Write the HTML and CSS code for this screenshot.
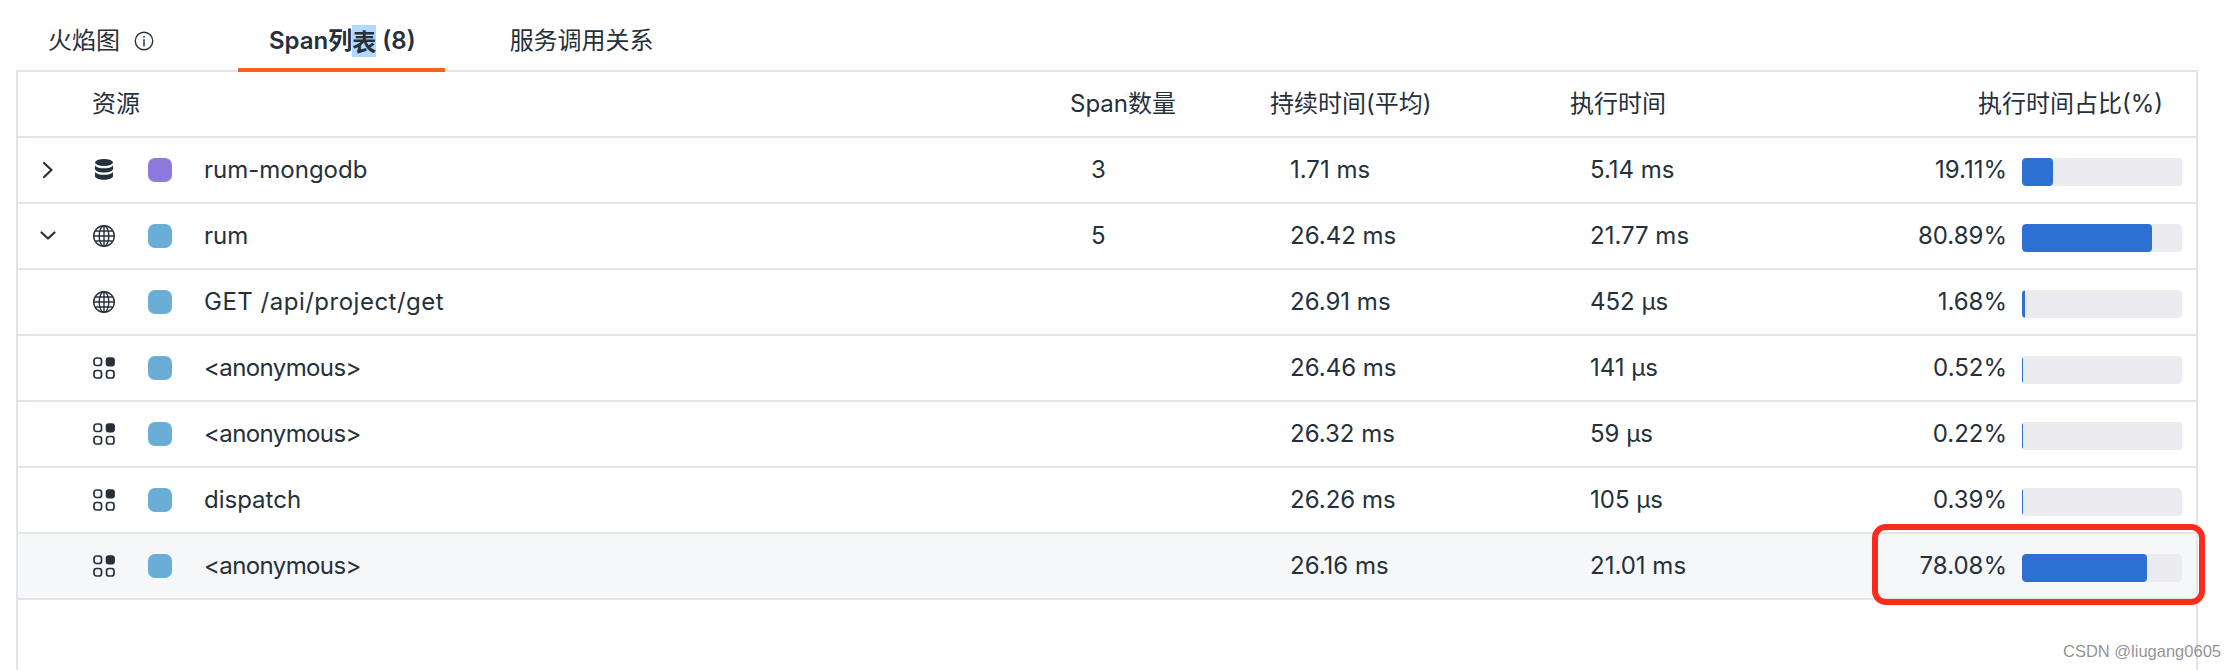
FILE: index.html
```html
<!DOCTYPE html>
<html lang="zh">
<head>
<meta charset="utf-8">
<title>Span列表</title>
<link rel="stylesheet" href="styles.css">
</head>
<body>
<svg class="defs" width="0" height="0" aria-hidden="true">
  <symbol id="i-right" viewBox="0 0 24 24"><path d="M8 5l7.500 7-7.500 7" fill="none" stroke="currentColor" stroke-width="2.200" stroke-linecap="round" stroke-linejoin="round"/></symbol>
  <symbol id="i-down" viewBox="0 0 24 24"><path d="M5.500 8.500l6.500 6 6.500-6" fill="none" stroke="currentColor" stroke-width="2.200" stroke-linecap="round" stroke-linejoin="round"/></symbol>
  <symbol id="i-db" viewBox="0 0 24 24">
    <ellipse cx="12" cy="4.500" rx="9" ry="3.500" fill="currentColor"/>
    <path d="M3 7.500c1.500 2 5 2.800 9 2.800s7.500-.8 9-2.800v3.500c0 1.900-4 3.500-9 3.500s-9-1.600-9-3.500z" fill="currentColor"/>
    <path d="M3 14c1.500 2 5 2.800 9 2.800s7.500-.8 9-2.800v4c0 2-4 3.800-9 3.800s-9-1.800-9-3.800z" fill="currentColor"/>
  </symbol>
  <symbol id="i-globe" viewBox="0 0 24 24">
    <g fill="none" stroke="currentColor" stroke-width="1.400">
      <circle cx="12" cy="12" r="10.300"/>
      <ellipse cx="12" cy="12" rx="4.800" ry="10.300"/>
      <path d="M12 1.700v20.600M1.700 12h20.600M3.200 7h17.600M3.200 17h17.600"/>
    </g>
  </symbol>
  <symbol id="i-grid" viewBox="0 0 24 24">
    <g fill="none" stroke="currentColor" stroke-width="1.700">
      <rect x="2" y="2" width="7.500" height="7.500" rx="2.500"/>
      <rect x="2" y="14.500" width="7.500" height="7.500" rx="2.500"/>
      <rect x="14.500" y="14.500" width="7.500" height="7.500" rx="2.500"/>
    </g>
    <rect x="13.700" y="1.200" width="9.200" height="9.200" rx="3" fill="currentColor"/>
  </symbol>
  <symbol id="i-info" viewBox="0 0 24 24">
    <circle cx="12" cy="12" r="9.500" fill="none" stroke="currentColor" stroke-width="1.500"/>
    <rect x="11.200" y="10" width="1.600" height="8" fill="currentColor"/>
    <rect x="11.200" y="6.500" width="1.600" height="1.800" fill="currentColor"/>
  </symbol>
</svg>

<div class="page">
  <nav class="tabs">
    <div class="tab">火焰图<svg class="info"><use href="#i-info"/></svg></div>
    <div class="tab active">Span列<span class="selected">表</span> (8)</div>
    <div class="tab">服务调用关系</div>
  </nav>

  <section class="table">
    <div class="row head">
      <div class="res-title">资源</div>
      <div>Span数量</div>
      <div>持续时间(平均)</div>
      <div>执行时间</div>
      <div class="pct-title">执行时间占比(%)</div>
    </div>

    <div class="row">
      <div class="exp"><svg class="ico"><use href="#i-right"/></svg></div>
      <svg class="ico"><use href="#i-db"/></svg>
      <span class="swatch purple"></span>
      <div>rum-mongodb</div>
      <div class="val-count">3</div>
      <div class="val">1.71 ms</div>
      <div class="val">5.14 ms</div>
      <div class="pct"><span>19.11%</span><div class="track"><div class="fill" style="width:19.4%"></div></div></div>
    </div>

    <div class="row">
      <div class="exp"><svg class="ico"><use href="#i-down"/></svg></div>
      <svg class="ico"><use href="#i-globe"/></svg>
      <span class="swatch blue"></span>
      <div>rum</div>
      <div class="val-count">5</div>
      <div class="val">26.42 ms</div>
      <div class="val">21.77 ms</div>
      <div class="pct"><span>80.89%</span><div class="track"><div class="fill" style="width:81.25%"></div></div></div>
    </div>

    <div class="row">
      <div class="exp"></div>
      <svg class="ico"><use href="#i-globe"/></svg>
      <span class="swatch blue"></span>
      <div class="name-path">GET /api/project/get</div>
      <div></div>
      <div class="val">26.91 ms</div>
      <div class="val">452 µs</div>
      <div class="pct"><span>1.68%</span><div class="track"><div class="fill" style="width:1.9%"></div></div></div>
    </div>

    <div class="row">
      <div class="exp"></div>
      <svg class="ico"><use href="#i-grid"/></svg>
      <span class="swatch blue"></span>
      <div class="name-anon">&lt;anonymous&gt;</div>
      <div></div>
      <div class="val">26.46 ms</div>
      <div class="val">141 µs</div>
      <div class="pct"><span>0.52%</span><div class="track"><div class="fill" style="width:0.6%"></div></div></div>
    </div>

    <div class="row">
      <div class="exp"></div>
      <svg class="ico"><use href="#i-grid"/></svg>
      <span class="swatch blue"></span>
      <div class="name-anon">&lt;anonymous&gt;</div>
      <div></div>
      <div class="val">26.32 ms</div>
      <div class="val">59 µs</div>
      <div class="pct"><span>0.22%</span><div class="track"><div class="fill" style="width:0.4%"></div></div></div>
    </div>

    <div class="row">
      <div class="exp"></div>
      <svg class="ico"><use href="#i-grid"/></svg>
      <span class="swatch blue"></span>
      <div>dispatch</div>
      <div></div>
      <div class="val">26.26 ms</div>
      <div class="val">105 µs</div>
      <div class="pct"><span>0.39%</span><div class="track"><div class="fill" style="width:0.6%"></div></div></div>
    </div>

    <div class="row current">
      <div class="exp"></div>
      <svg class="ico"><use href="#i-grid"/></svg>
      <span class="swatch blue"></span>
      <div class="name-anon">&lt;anonymous&gt;</div>
      <div></div>
      <div class="val">26.16 ms</div>
      <div class="val">21.01 ms</div>
      <div class="pct"><span>78.08%</span><div class="track"><div class="fill" style="width:78.1%"></div></div></div>
    </div>
  </section>

  <div class="callout"></div>
  <div class="watermark">CSDN @liugang0605</div>
</div>
</body>
</html>
```

FILE: styles.css
```css
* { box-sizing: border-box; }

html, body {
  margin: 0;
  background: #fff;
}

.defs { position: absolute; }

.page {
  position: relative;
  height: 670px;
  overflow: hidden;
  display: flex;
  flex-direction: column;
  color: #25303b;
  font-family: Inter, "Noto Sans CJK SC", sans-serif;
  font-size: 24px;
  line-height: 32px;
}

.tabs {
  display: flex;
  height: 70px;
  padding-left: 16px;
  flex: none;
}

.tab {
  position: relative;
  display: flex;
  align-items: center;
  white-space: pre;
  height: 70px;
  padding: 12px 32px 0;
  margin-right: 32px;
}

.tab.active {
  font-weight: 600;
  padding: 12px 29px 0 31px;
  margin-right: 33px;
}

.tab.active::after {
  content: "";
  position: absolute;
  left: 0;
  right: 0;
  bottom: -2px;
  height: 4px;
  background: #fa6120;
}

.selected {
  background: #b3d7ff;
  font-family: "Noto Sans CJK SC", sans-serif;
}

.info {
  width: 22px;
  height: 22px;
  margin: 0 19px 0 13px;
}

.table {
  flex: 1;
  margin: 0 36px 0 16px;
  border: 2px solid #e1e5ea;
  border-bottom: 0;
}

.row {
  display: grid;
  grid-template-columns: 74px 56px 56px 866px 200px 300px 330px 1fr;
  align-items: center;
  height: 66px;
  border-bottom: 2px solid #e1e5ea;
  white-space: nowrap;
}

.head {
  grid-template-columns: 74px 978px 200px 300px 330px 1fr;
}

.res-title { grid-column: 2; }

.head .pct-title {
  text-align: right;
  padding-right: 33px;
}

.exp {
  padding-left: 18px;
  height: 24px;
}

.ico {
  display: block;
  width: 24px;
  height: 24px;
}

.swatch {
  display: block;
  width: 24px;
  height: 24px;
  border-radius: 7px;
}

.purple { background: #8c7bdd; }
.blue { background: #6aaed8; }

.name-path { letter-spacing: 0.5px; }
.name-anon { letter-spacing: -0.6px; }

.val-count { padding-left: 21px; }
.val { padding-left: 20px; }

.pct {
  display: flex;
  align-items: center;
  justify-content: flex-end;
  gap: 15px;
  padding-right: 14px;
}

.track {
  width: 160px;
  height: 28px;
  margin-top: 4px;
  border-radius: 4px;
  background: #ebebf0;
  overflow: hidden;
  flex: none;
}

.fill {
  height: 100%;
  border-radius: 4px;
  background: #2d70d3;
}

.current { background: #f6f7f9; }

.callout {
  position: absolute;
  left: 1872px;
  top: 524px;
  width: 333px;
  height: 81px;
  border: 6px solid #fb2c1f;
  border-radius: 14px;
}

.watermark {
  position: absolute;
  left: 2063px;
  top: 640px;
  font-family: "Liberation Sans", sans-serif;
  font-size: 16.500px;
  line-height: 22px;
  color: rgba(110, 110, 110, 0.75);
  white-space: nowrap;
}
```
